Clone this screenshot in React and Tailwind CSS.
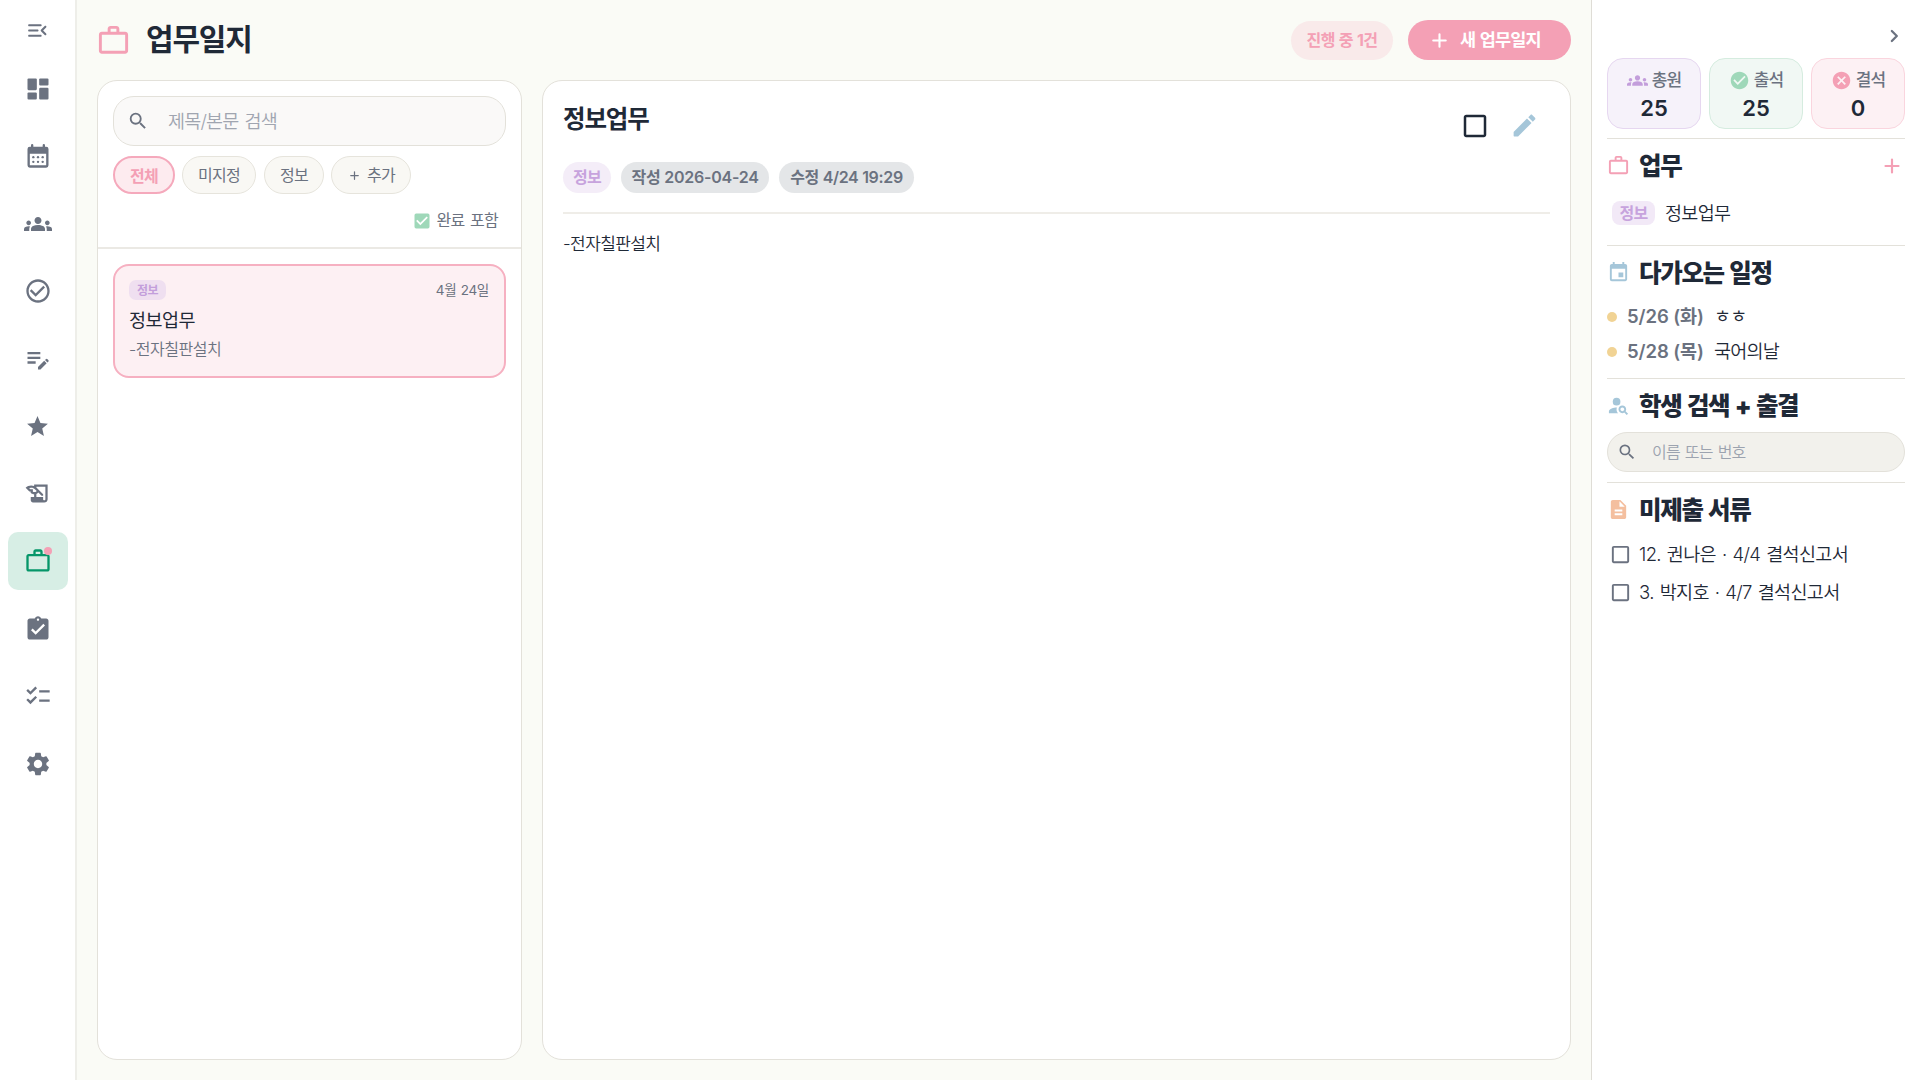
import { useState } from 'react'
import {
  MdDashboard, MdGroups, MdCheckCircleOutline, MdEditNote, MdStar, MdHistoryEdu, MdWorkOutline,
  MdAssignmentTurnedIn, MdChecklist, MdSettings, MdSearch, MdCheckBoxOutlineBlank, MdCheckBox,
  MdCheckCircle, MdCancel, MdEvent, MdPersonSearch, MdDescription
} from 'react-icons/md'

// Rounded icon variants
function MenuOpenIcon({ className }) {
  return (
    <svg viewBox="0 0 24 24" fill="currentColor" className={className}>
      <path d="M4 18h11c.55 0 1-.45 1-1s-.45-1-1-1H4c-.55 0-1 .45-1 1s.45 1 1 1zm0-5h8c.55 0 1-.45 1-1s-.45-1-1-1H4c-.55 0-1 .45-1 1s.45 1 1 1zM3 7c0 .55.45 1 1 1h11c.55 0 1-.45 1-1s-.45-1-1-1H4c-.55 0-1 .45-1 1zm17.3 7.88L17.42 12l2.88-2.88c.39-.39.39-1.02 0-1.41-.39-.39-1.02-.39-1.41 0L15.3 11.3c-.39.39-.39 1.02 0 1.41l3.59 3.59c.39.39 1.02.39 1.41 0 .38-.39.39-1.03 0-1.42z" />
    </svg>
  )
}

function AddIcon({ className }) {
  return (
    <svg viewBox="0 0 24 24" fill="none" stroke="currentColor" strokeWidth="2" strokeLinecap="round" className={className}>
      <path d="M12 6v12M6 12h12" />
    </svg>
  )
}

function ChevronIcon({ className }) {
  return (
    <svg viewBox="0 0 24 24" fill="none" stroke="currentColor" strokeWidth="2.1" strokeLinecap="round" strokeLinejoin="round" className={className}>
      <path d="M10 7.4l4.6 4.6-4.6 4.6" />
    </svg>
  )
}

function EditIcon({ className }) {
  return (
    <svg viewBox="0 0 24 24" fill="currentColor" className={className}>
      <path d="M3 17.46v3.04c0 .28.22.5.5.5h3.04c.13 0 .26-.05.35-.15L17.81 9.94l-3.75-3.75L3.15 17.1c-.1.1-.15.22-.15.36zM20.71 7.04c.39-.39.39-1.02 0-1.41l-2.34-2.34c-.39-.39-1.02-.39-1.41 0l-1.83 1.83 3.75 3.75 1.83-1.83z" />
    </svg>
  )
}

function DashboardIcon({ className }) {
  return (
    <svg viewBox="0 0 24 24" fill="currentColor" className={className}>
      <rect x="3" y="3" width="8" height="10" rx="0.9" />
      <rect x="3" y="15" width="8" height="6" rx="0.9" />
      <rect x="13" y="11" width="8" height="10" rx="0.9" />
      <rect x="13" y="3" width="8" height="6" rx="0.9" />
    </svg>
  )
}

function CalendarIcon({ className }) {
  return (
    <svg viewBox="0 0 24 24" fill="currentColor" className={className}>
      <path fillRule="evenodd" d="M7 1.8a1 1 0 0 1 1 1V4h8V2.8a1 1 0 0 1 2 0V4h1a2 2 0 0 1 2 2v14a2 2 0 0 1-2 2H5a2 2 0 0 1-2-2V6a2 2 0 0 1 2-2h1V2.8a1 1 0 0 1 1-1zM5 10v10h14V10z" />
      <circle cx="8" cy="13" r="1" />
      <circle cx="12" cy="13" r="1" />
      <circle cx="16" cy="13" r="1" />
      <circle cx="8" cy="17" r="1" />
      <circle cx="12" cy="17" r="1" />
      <circle cx="16" cy="17" r="1" />
    </svg>
  )
}

const navItems = [
  { id: 'dashboard', icon: DashboardIcon, size: 'size-[28px]' },
  { id: 'calendar', icon: CalendarIcon, size: 'size-[28px]' },
  { id: 'students', icon: MdGroups, size: 'size-[28px]' },
  { id: 'attendance', icon: MdCheckCircleOutline, size: 'size-[28px]' },
  { id: 'notes', icon: MdEditNote, size: 'size-[28px]' },
  { id: 'favorites', icon: MdStar, size: 'size-[25px]' },
  { id: 'history', icon: MdHistoryEdu, size: 'size-[27px]' },
  { id: 'work', icon: MdWorkOutline, size: 'size-[28px]', badge: true },
  { id: 'assignments', icon: MdAssignmentTurnedIn, size: 'size-[28px]' },
  { id: 'checklist', icon: MdChecklist, size: 'size-[28px]' },
  { id: 'settings', icon: MdSettings, size: 'size-[28px]' }
]

const events = [
  { date: '5/26 (화)', title: 'ㅎㅎ' },
  { date: '5/28 (목)', title: '국어의날' }
]

const documents = ['12. 권나은 · 4/4 결석신고서', '3. 박지호 · 4/7 결석신고서']

function Sidebar({ active, onSelect }) {
  return (
    <nav className="w-[77px] shrink-0 border-r-2 border-[#eeeee9] bg-white flex flex-col items-center">
      <button className="h-[60px] flex items-center justify-center text-[#6b7280]">
        <MenuOpenIcon className="size-[25px]" />
      </button>
      <div className="flex flex-col gap-[9.47px]">
        {navItems.map(({ id, icon: Icon, size, badge }) => (
          <button
            key={id}
            onClick={() => onSelect(id)}
            className={`relative w-[60px] h-[58px] rounded-[10px] flex items-center justify-center ${
              active === id ? 'bg-[#d7eee5] text-[#059669]' : 'text-[#6b7280]'
            }`}
          >
            <Icon className={size} />
            {badge && <span className="absolute top-[15px] right-[16px] size-2 rounded-full bg-[#f4a0b5]" />}
          </button>
        ))}
      </div>
    </nav>
  )
}

function FilterChip({ active, className, children }) {
  return (
    <button
      className={`h-[38px] rounded-[19px] flex items-center justify-center text-[16px] tracking-[-0.05em] ${
        active
          ? 'border-2 border-[#f5a9bc] bg-[#fdebef] text-[#f4a0b5] font-bold pt-[2px]'
          : 'border border-[#e6e4dc] bg-[#f9f8f4] text-[#6b7280] font-normal'
      } ${className}`}
    >
      {children}
    </button>
  )
}

function ListPanel() {
  return (
    <section className="w-[425px] shrink-0 bg-white border border-[#e3e1da] rounded-[20px] overflow-hidden">
      <div className="h-[168px] px-[15px] pt-[15px] border-b-2 border-[#ebe9e4]">
        <div className="h-[50px] rounded-[21px] border border-[#e3e1da] bg-[#faf9f8] flex items-center pl-[13px]">
          <MdSearch className="size-[22px] text-[#6b7280]" />
          <span className="ml-[19px] mt-px text-[18.5px] leading-none tracking-[-0.045em] [word-spacing:0.1em] font-[350] text-[#a0a5b0]">제목/본문 검색</span>
        </div>
        <div className="flex mt-[10px]">
          <FilterChip active className="w-[62px]">전체</FilterChip>
          <FilterChip className="w-[74px] ml-[7px]">미지정</FilterChip>
          <FilterChip className="w-[60px] ml-[8px]">정보</FilterChip>
          <FilterChip className="w-[80px] ml-[7px] gap-[5px]">
            <AddIcon className="size-[15px]" />
            추가
          </FilterChip>
        </div>
        <label className="flex items-center justify-end mt-[17px] pr-[8px] h-[20px] gap-[5px]">
          <MdCheckBox className="size-[20px] text-[#9fd8b9]" />
          <span className="-mt-[2px] text-[16px] leading-none tracking-[-0.045em] [word-spacing:0.1em] text-[#6b7280]">완료 포함</span>
        </label>
      </div>

      <div className="p-[15px]">
        <article className="h-[114px] rounded-[16px] border-2 border-[#f6b0c1] bg-[#fdf0f3] px-[14px] pt-[14px]">
          <div className="flex items-center justify-between">
            <span className="w-[37px] h-[20px] rounded-[7px] bg-[#efdff0] text-[#c39edb] text-[12px] font-bold leading-none tracking-[-0.05em] flex items-center justify-center pt-px">
              정보
            </span>
            <span className="mt-px mr-px text-[13.5px] leading-none tracking-[-0.02em] [word-spacing:0.05em] text-[#6b7280]">4월 24일</span>
          </div>
          <h3 className="mt-[8px] h-[24px] text-[18.5px] leading-[24px] font-normal tracking-[-0.03em] text-[#1f2937]">정보업무</h3>
          <p className="mt-[6px] text-[16px] leading-[22px] font-[350] tracking-[-0.03em] text-[#6b7280]">-전자칠판설치</p>
        </article>
      </div>
    </section>
  )
}

function DetailPanel() {
  return (
    <section className="flex-1 bg-white border border-[#e3e1da] rounded-[20px] px-[20px]">
      <div className="flex h-[80px]">
        <h2 className="mt-[23px] text-[24.5px] leading-[30px] font-bold tracking-[-0.045em] text-[#1f2937]">정보업무</h2>
        <div className="ml-auto mt-[30px] mr-[11px] flex gap-[20px] h-[30px]">
          <MdCheckBoxOutlineBlank className="size-[30px] text-[#1f2937]" />
          <EditIcon className="size-[29px] text-[#a5c6d9]" />
        </div>
      </div>
      <div className="flex items-center h-[32px] text-[16px] font-semibold leading-none">
        <span className="w-[48px] h-[31px] rounded-full bg-[#f4edf8] text-[#c7a3dd] tracking-[-0.05em] flex items-center justify-center">정보</span>
        <span className="ml-[10px] w-[148px] h-[31px] rounded-full bg-[#e4e6e8] text-[#6b7280] tracking-[-0.015em] flex items-center justify-center">작성 2026-04-24</span>
        <span className="ml-[10px] w-[135px] h-[31px] rounded-full bg-[#e4e6e8] text-[#6b7280] tracking-[-0.02em] flex items-center justify-center">수정 4/24 19:29</span>
      </div>
      <div className="mt-[19px] border-t-2 border-[#efede8]" />
      <p className="mt-[18px] text-[17px] leading-[24px] font-[350] tracking-[-0.035em] text-[#1f2937]">-전자칠판설치</p>
    </section>
  )
}

function StatCard({ icon: Icon, label, value, className, iconClassName }) {
  return (
    <div className={`w-[94px] h-[71px] rounded-[16px] border flex flex-col items-center ${className}`}>
      <div className="mt-[10px] h-[22px] flex items-center gap-[4px]">
        <Icon className={iconClassName} />
        <span className="text-[17px] leading-none font-medium tracking-[-0.05em] text-[#6b7280]">{label}</span>
      </div>
      <span className="mt-[4px] text-[22px] leading-[26px] font-semibold text-[#1f2937]">{value}</span>
    </div>
  )
}

function SectionTitle({ icon: Icon, color, children, action }) {
  return (
    <div className="flex items-center h-[30px]">
      <Icon className={`size-[23px] -mt-px ${color}`} />
      <h2 className="ml-[9px] text-[24.5px] leading-[30px] font-black tracking-[-0.055em] [word-spacing:0.08em] text-[#1f2937]">{children}</h2>
      {action}
    </div>
  )
}

function InfoPanel() {
  return (
    <aside className="w-[329px] shrink-0 border-l border-[#dfddd6] bg-white pl-[15px] pr-[15px]">
      <div className="h-[58px] flex justify-end pt-[23px] -mr-[2px]">
        <ChevronIcon className="size-[26px] text-[#6b7280]" />
      </div>
      <div className="flex justify-between pb-[9px] border-b border-[#e3e1da]">
        <StatCard icon={MdGroups} label="총원" value="25" className="bg-[#f6f2fa] border-[#e6d7f0]" iconClassName="size-[21px] text-[#c39edb]" />
        <StatCard icon={MdCheckCircle} label="출석" value="25" className="bg-[#f1f8f4] border-[#d5ecdf]" iconClassName="size-[21px] text-[#9fd8b9]" />
        <StatCard icon={MdCancel} label="결석" value="0" className="bg-[#fdf1f4] border-[#fad5de]" iconClassName="size-[21px] text-[#f4a0b5]" />
      </div>

      <div className="h-[107px] pt-[12px] border-b border-[#e3e1da]">
        <SectionTitle icon={MdWorkOutline} color="text-[#f4a0b5]" action={<AddIcon className="size-[26px] ml-auto text-[#f4a0b5]" />}>
          업무
        </SectionTitle>
        <div className="mt-[20px] ml-[5px] flex items-center">
          <span className="w-[43px] h-[24px] rounded-[8px] bg-[#f2e9f7] text-[#c7a3dd] text-[16px] font-semibold leading-none tracking-[-0.05em] flex items-center justify-center">
            정보
          </span>
          <span className="ml-[10px] text-[18.5px] leading-none font-[350] tracking-[-0.035em] text-[#1f2937]">정보업무</span>
        </div>
      </div>

      <div className="h-[133px] pt-[12px] border-b border-[#e3e1da]">
        <SectionTitle icon={MdEvent} color="text-[#a5c6d9]">다가오는 일정</SectionTitle>
        <ul className="mt-[11px]">
          {events.map((e) => (
            <li key={e.date} className="flex items-center h-[35px] text-[18.5px] leading-none">
              <span className="size-[10px] rounded-full bg-[#f1d394]" />
              <span className="ml-[10px] w-[87px] font-semibold tracking-[-0.005em] text-[#6b7280]">{e.date}</span>
              <span className="font-[350] tracking-[-0.04em] text-[#1f2937]">{e.title}</span>
            </li>
          ))}
        </ul>
      </div>

      <div className="h-[104px] pt-[12px] border-b border-[#e3e1da]">
        <SectionTitle icon={MdPersonSearch} color="text-[#a5c6d9]">학생 검색 + 출결</SectionTitle>
        <div className="mt-[11px] h-[40px] rounded-[20px] border border-[#e3e1da] bg-[#f2f1ec] flex items-center pl-[9px]">
          <MdSearch className="size-[20px] text-[#6b7280]" />
          <span className="ml-[15px] text-[16px] leading-none font-[350] tracking-[-0.05em] [word-spacing:0.08em] text-[#9ca3af]">이름 또는 번호</span>
        </div>
      </div>

      <div className="pt-[12px]">
        <SectionTitle icon={MdDescription} color="text-[#f4bf9f]">미제출 서류</SectionTitle>
        <ul className="mt-[10px]">
          {documents.map((doc) => (
            <li key={doc} className="flex items-center h-[38px] ml-[2px]">
              <MdCheckBoxOutlineBlank className="size-[23px] text-[#6b7280]" />
              <span className="ml-[7px] text-[18.5px] leading-none font-[350] tracking-[-0.035em] [word-spacing:0.075em] text-[#1f2937]">{doc}</span>
            </li>
          ))}
        </ul>
      </div>
    </aside>
  )
}

export default function App() {
  const [active, setActive] = useState('work')

  return (
    <div className="w-[1920px] h-[1080px] flex overflow-hidden bg-[#fafbf6] font-['Inter','Noto_Sans_CJK_KR',sans-serif]">
      <Sidebar active={active} onSelect={setActive} />

      <main className="flex-1 flex flex-col pl-[20px] pr-[20px] pb-[20px]">
        <header className="h-[80px] shrink-0 flex items-center">
          <MdWorkOutline className="size-[35px] -ml-px text-[#f4a0b5]" />
          <h1 className="ml-[15px] -mt-[2px] text-[30px] leading-[40px] font-bold tracking-[-0.04em] text-[#1f2937]">업무일지</h1>
          <span className="ml-auto w-[102px] h-[39px] rounded-full bg-[#f9eaea] text-[#f4a0b5] text-[16px] leading-none font-bold tracking-[-0.035em] [word-spacing:0.05em] flex items-center justify-center">
            진행 중 1건
          </span>
          <button className="ml-[15px] w-[163px] h-[40px] rounded-full bg-[#f4a0b5] text-white text-[17.5px] leading-none font-semibold tracking-[-0.045em] [word-spacing:0.04em] flex items-center pl-[19px]">
            <AddIcon className="size-[25px]" />
            <span className="ml-[8px]">새 업무일지</span>
          </button>
        </header>
        <div className="flex-1 flex gap-[20px]">
          <ListPanel />
          <DetailPanel />
        </div>
      </main>

      <InfoPanel />
    </div>
  )
}
